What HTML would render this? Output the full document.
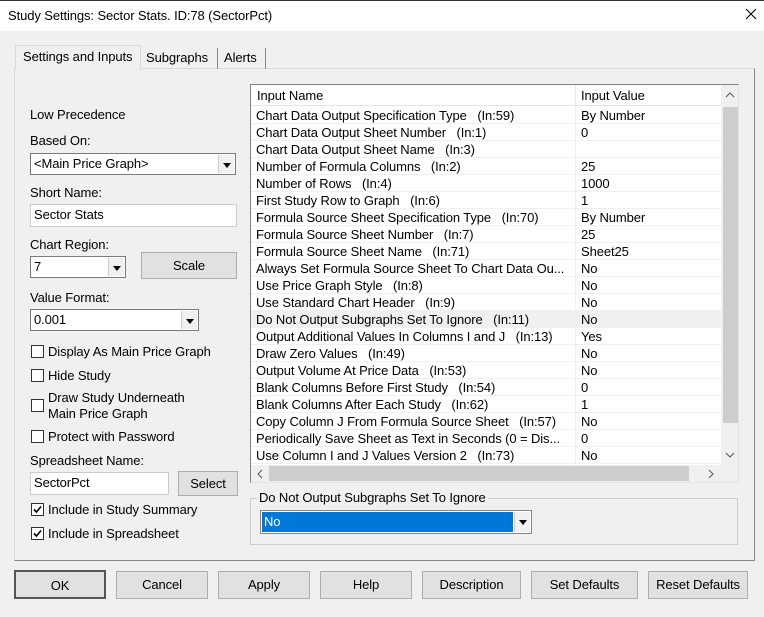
<!DOCTYPE html><html><head><style>
*{box-sizing:border-box}
body{margin:0;width:764px;height:617px;background:#f0f0f0;font-family:"Liberation Sans",sans-serif;font-size:13px;color:#000;position:relative;overflow:hidden;letter-spacing:-0.1px}
.a{position:absolute;white-space:nowrap}
.title{left:0;top:0;width:764px;height:31px;background:#fff;border-top:1px solid #333}
.tb{border:1px solid #adadad;background:#e1e1e1;text-align:center}
.in{background:#fff;border:1px solid #7a7a7a;padding:2px 3px}
.dd{position:absolute;right:1px;top:1px;bottom:1px;width:16px;background:#f0f0f0;border-left:1px solid #ccc}
.dd:after{content:"";position:absolute;left:4px;top:8px;border:4px solid transparent;border-top:5px solid #000}
.cb{width:13px;height:13px;border:1px solid #333;background:#fff}
.row{position:absolute;left:0;width:470px;height:17px;border-bottom:1px solid #f0f0f0}
.row span{position:absolute;top:1px}
</style></head><body>
<div class="a title"></div>
<div class="a" style="left:8px;top:8px">Study Settings: Sector Stats. ID:78 (SectorPct)</div>
<svg class="a" style="left:745px;top:8px" width="12" height="12"><path d="M1 1L11 11M11 1L1 11" stroke="#000" stroke-width="1.1"/></svg>
<!-- tabs -->
<div class="a" style="left:14px;top:68px;width:741px;height:493px;border:1px solid #d9d9d9;border-right-color:#888;border-bottom-color:#888;background:#f0f0f0"></div>
<div class="a" style="left:15px;top:45px;width:126px;height:25px;border:1px solid #d9d9d9;border-bottom:none;background:#f0f0f0;padding:3px 0 0 7px">Settings and Inputs</div>
<div class="a" style="left:141px;top:48px;width:77px;height:21px;border-right:1px solid #888;padding:2px 0 0 5px">Subgraphs</div>
<div class="a" style="left:219px;top:48px;width:47px;height:21px;border-right:1px solid #888;padding:2px 0 0 5px">Alerts</div>
<!-- left -->
<div class="a" style="left:30px;top:107px">Low Precedence</div>
<div class="a" style="left:30px;top:133px">Based On:</div>
<div class="a in" style="left:30px;top:153px;width:206px;height:22px">&lt;Main Price Graph&gt;<div class="dd"></div></div>
<div class="a" style="left:30px;top:185px">Short Name:</div>
<div class="a in" style="left:30px;top:204px;width:207px;height:23px;border-color:#ccc">Sector Stats</div>
<div class="a" style="left:30px;top:237px">Chart Region:</div>
<div class="a in" style="left:30px;top:256px;width:96px;height:22px">7<div class="dd"></div></div>
<div class="a tb" style="left:141px;top:252px;width:96px;height:27px;line-height:25px">Scale</div>
<div class="a" style="left:30px;top:290px">Value Format:</div>
<div class="a in" style="left:30px;top:309px;width:169px;height:22px">0.001<div class="dd"></div></div>
<div class="a cb" style="left:31px;top:345px"></div><div class="a" style="left:48px;top:344px">Display As Main Price Graph</div>
<div class="a cb" style="left:31px;top:369px"></div><div class="a" style="left:48px;top:368px">Hide Study</div>
<div class="a cb" style="left:31px;top:399px"></div><div class="a" style="left:48px;top:390px;line-height:16px">Draw Study Underneath<br>Main Price Graph</div>
<div class="a cb" style="left:31px;top:430px"></div><div class="a" style="left:48px;top:429px">Protect with Password</div>
<div class="a" style="left:30px;top:453px">Spreadsheet Name:</div>
<div class="a in" style="left:30px;top:472px;width:139px;height:23px;border-color:#ccc">SectorPct</div>
<div class="a tb" style="left:178px;top:471px;width:60px;height:25px;line-height:23px">Select</div>
<div class="a cb" style="left:31px;top:503px"><svg width="11" height="11" style="position:absolute;left:0;top:0"><path d="M2 5.5L4.5 8L9 2.5" stroke="#000" stroke-width="1.6" fill="none"/></svg></div><div class="a" style="left:48px;top:502px">Include in Study Summary</div>
<div class="a cb" style="left:31px;top:527px"><svg width="11" height="11" style="position:absolute;left:0;top:0"><path d="M2 5.5L4.5 8L9 2.5" stroke="#000" stroke-width="1.6" fill="none"/></svg></div><div class="a" style="left:48px;top:526px">Include in Spreadsheet</div>
<!-- table -->
<div class="a" style="left:250px;top:84px;width:489px;height:399px;border:1px solid #828282;border-right-color:#e3e3e3;border-bottom-color:#e3e3e3;background:#fff;overflow:hidden">
<div class="a" style="left:0;top:0;width:470px;height:21px;border-bottom:1px solid #e5e5e5"></div>
<div class="a" style="left:6px;top:3px">Input Name</div>
<div class="a" style="left:324px;top:0;height:21px;border-left:1px solid #e5e5e5"></div>
<div class="a" style="left:330px;top:3px">Input Value</div>
<div class="a" style="left:324px;top:21px;height:360px;border-left:1px solid #f0f0f0"></div>
<div style="position:absolute;left:0;top:22px;width:470px">
<div class="row" style="top:0"><span style="left:5px">Chart Data Output Specification Type&nbsp;&nbsp; (In:59)</span><span style="left:330px">By Number</span></div>
<div class="row" style="top:17px"><span style="left:5px">Chart Data Output Sheet Number&nbsp;&nbsp; (In:1)</span><span style="left:330px">0</span></div>
<div class="row" style="top:34px"><span style="left:5px">Chart Data Output Sheet Name&nbsp;&nbsp; (In:3)</span></div>
<div class="row" style="top:51px"><span style="left:5px">Number of Formula Columns&nbsp;&nbsp; (In:2)</span><span style="left:330px">25</span></div>
<div class="row" style="top:68px"><span style="left:5px">Number of Rows&nbsp;&nbsp; (In:4)</span><span style="left:330px">1000</span></div>
<div class="row" style="top:85px"><span style="left:5px">First Study Row to Graph&nbsp;&nbsp; (In:6)</span><span style="left:330px">1</span></div>
<div class="row" style="top:102px"><span style="left:5px">Formula Source Sheet Specification Type&nbsp;&nbsp; (In:70)</span><span style="left:330px">By Number</span></div>
<div class="row" style="top:119px"><span style="left:5px">Formula Source Sheet Number&nbsp;&nbsp; (In:7)</span><span style="left:330px">25</span></div>
<div class="row" style="top:136px"><span style="left:5px">Formula Source Sheet Name&nbsp;&nbsp; (In:71)</span><span style="left:330px">Sheet25</span></div>
<div class="row" style="top:153px"><span style="left:5px">Always Set Formula Source Sheet To Chart Data Ou...</span><span style="left:330px">No</span></div>
<div class="row" style="top:170px"><span style="left:5px">Use Price Graph Style&nbsp;&nbsp; (In:8)</span><span style="left:330px">No</span></div>
<div class="row" style="top:187px"><span style="left:5px">Use Standard Chart Header&nbsp;&nbsp; (In:9)</span><span style="left:330px">No</span></div>
<div class="row" style="top:204px;background:#f0f0f0"><span style="left:5px">Do Not Output Subgraphs Set To Ignore&nbsp;&nbsp; (In:11)</span><span style="left:330px">No</span></div>
<div class="row" style="top:221px"><span style="left:5px">Output Additional Values In Columns I and J&nbsp;&nbsp; (In:13)</span><span style="left:330px">Yes</span></div>
<div class="row" style="top:238px"><span style="left:5px">Draw Zero Values&nbsp;&nbsp; (In:49)</span><span style="left:330px">No</span></div>
<div class="row" style="top:255px"><span style="left:5px">Output Volume At Price Data&nbsp;&nbsp; (In:53)</span><span style="left:330px">No</span></div>
<div class="row" style="top:272px"><span style="left:5px">Blank Columns Before First Study&nbsp;&nbsp; (In:54)</span><span style="left:330px">0</span></div>
<div class="row" style="top:289px"><span style="left:5px">Blank Columns After Each Study&nbsp;&nbsp; (In:62)</span><span style="left:330px">1</span></div>
<div class="row" style="top:306px"><span style="left:5px">Copy Column J From Formula Source Sheet&nbsp;&nbsp; (In:57)</span><span style="left:330px">No</span></div>
<div class="row" style="top:323px"><span style="left:5px">Periodically Save Sheet as Text in Seconds (0 = Dis...</span><span style="left:330px">0</span></div>
<div class="row" style="top:340px"><span style="left:5px">Use Column I and J Values Version 2&nbsp;&nbsp; (In:73)</span><span style="left:330px">No</span></div>
</div>
<div class="a" style="left:470px;top:0;width:17px;height:380px;background:#f0f0f0"></div>
<div class="a" style="left:472px;top:22px;width:15px;height:316px;background:#cdcdcd"></div>
<svg class="a" style="left:474px;top:6px" width="10" height="8"><path d="M1 6L5 2L9 6" stroke="#555" fill="none"/></svg>
<svg class="a" style="left:474px;top:366px" width="10" height="8"><path d="M1 2L5 6L9 2" stroke="#555" fill="none"/></svg>
<div class="a" style="left:0;top:380px;width:487px;height:17px;background:#f0f0f0"></div>
<div class="a" style="left:18px;top:381px;width:420px;height:15px;background:#cdcdcd"></div>
<svg class="a" style="left:5px;top:384px" width="8" height="10"><path d="M6 1L2 5L6 9" stroke="#555" fill="none"/></svg>
<svg class="a" style="left:456px;top:384px" width="8" height="10"><path d="M2 1L6 5L2 9" stroke="#555" fill="none"/></svg>
</div>
<!-- group -->
<div class="a" style="left:250px;top:498px;width:488px;height:47px;border:1px solid #ccc"></div>
<div class="a" style="left:257px;top:490px;background:#f0f0f0;padding:0 2px">Do Not Output Subgraphs Set To Ignore</div>
<div class="a" style="left:260px;top:510px;width:272px;height:24px;border:1px solid #888;background:#fff;padding:1px">
<div style="background:#0078d7;color:#fff;height:20px;width:251px;padding:2px 2px">No</div><div class="dd" style="background:#f0f0f0"></div></div>
<!-- buttons -->
<div class="a tb" style="left:14px;top:570px;width:92px;height:29px;line-height:27px;border:2px solid #555">OK</div>
<div class="a tb" style="left:116px;top:571px;width:92px;height:28px;line-height:26px">Cancel</div>
<div class="a tb" style="left:218px;top:571px;width:92px;height:28px;line-height:26px">Apply</div>
<div class="a tb" style="left:320px;top:571px;width:92px;height:28px;line-height:26px">Help</div>
<div class="a tb" style="left:422px;top:571px;width:99px;height:28px;line-height:26px">Description</div>
<div class="a tb" style="left:531px;top:571px;width:107px;height:28px;line-height:26px">Set Defaults</div>
<div class="a tb" style="left:648px;top:571px;width:100px;height:28px;line-height:26px">Reset Defaults</div>
</body></html>
